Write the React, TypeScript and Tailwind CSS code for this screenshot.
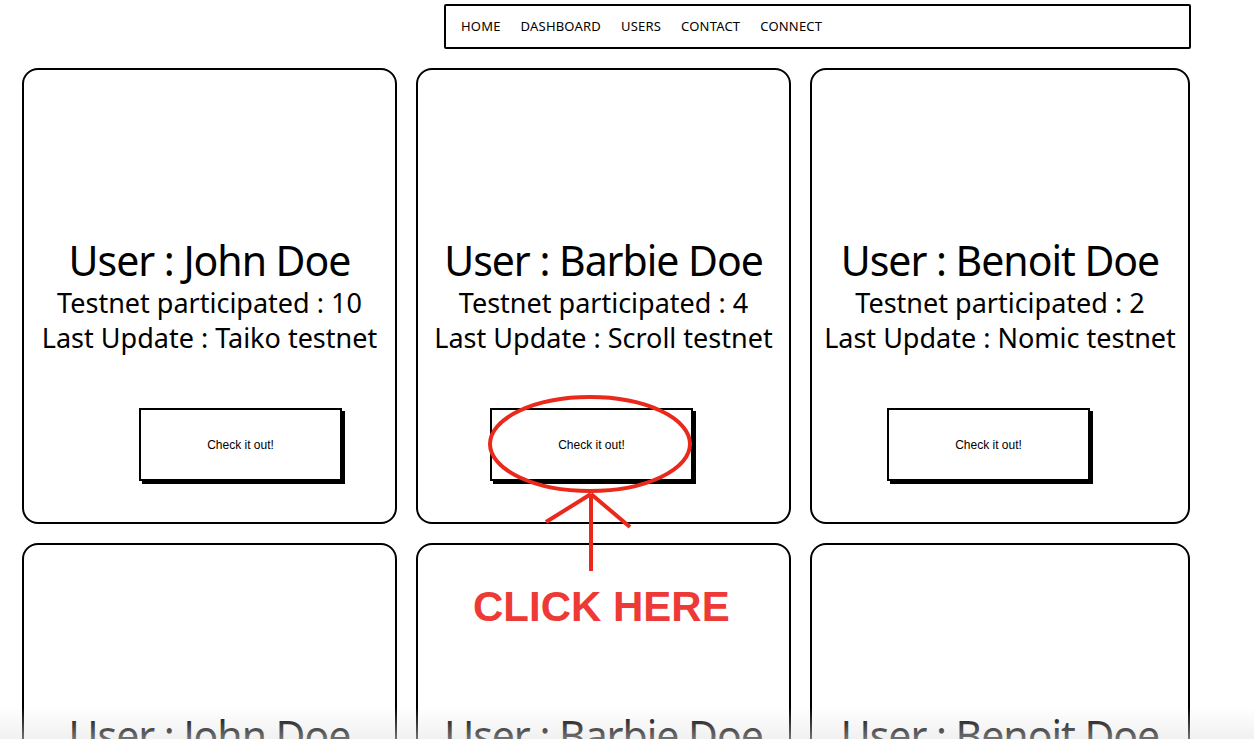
import React from 'react';

interface UserCard {
  name: string;
  testnets: number;
  lastUpdate: string;
  btnOffset: string;
}

const users: UserCard[] = [
  { name: 'John Doe', testnets: 10, lastUpdate: 'Taiko testnet', btnOffset: 'ml-[115px]' },
  { name: 'Barbie Doe', testnets: 4, lastUpdate: 'Scroll testnet', btnOffset: 'ml-[72px]' },
  { name: 'Benoit Doe', testnets: 2, lastUpdate: 'Nomic testnet', btnOffset: 'ml-[75px]' },
];

const navItems = ['HOME', 'DASHBOARD', 'USERS', 'CONTACT', 'CONNECT'];

const Card: React.FC<{ user: UserCard }> = ({ user }) => (
  <div className="h-[456px] border-2 border-black rounded-[16px] bg-white flex flex-col">
    <div className="pt-[170px] flex flex-col items-center text-black leading-none whitespace-nowrap">
      <h2 className="text-[41px] font-normal tracking-tight">User : {user.name}</h2>
      <p className="text-[27px] mt-[8px]">Testnet participated : {user.testnets}</p>
      <p className="text-[27px] mt-[8px]">Last Update : {user.lastUpdate}</p>
    </div>
    <button
      className={`${user.btnOffset} mt-[57px] w-[203px] h-[73px] border-2 border-black bg-white shadow-[3px_3px_0_0_#000] text-[12px] text-black`}
      style={{ fontFamily: '"Liberation Sans", Arial, sans-serif' }}
    >
      Check it out!
    </button>
  </div>
);

export default function App() {
  return (
    <div
      className="relative w-[1254px] h-[739px] overflow-hidden bg-white"
      style={{ fontFamily: '"Noto Sans", Lato, sans-serif' }}
    >
      {/* Nav */}
      <div className="pl-[444px] pt-[4px]">
        <nav className="w-[747px] h-[45px] border-2 border-black rounded-[2px] flex items-center pl-[15px] gap-[20px] text-[13px] tracking-[0.2px] text-black">
          {navItems.map((item) => (
            <a key={item} href="#" className="leading-none">
              {item}
            </a>
          ))}
        </nav>
      </div>

      {/* Cards */}
      <div className="mt-[19px] pl-[22px] grid grid-cols-[375px_375px_380px] gap-x-[19px] gap-y-[19px]">
        {[...users, ...users].map((u, i) => (
          <Card key={i} user={u} />
        ))}
      </div>

      {/* Annotation */}
      <svg className="absolute inset-0 pointer-events-none" width="1254" height="739">
        <ellipse cx="590" cy="444" rx="100" ry="47" fill="none" stroke="#e8291c" strokeWidth="4" />
        <line x1="591" y1="494" x2="591" y2="571" stroke="#e8291c" strokeWidth="4" />
        <line x1="546" y1="522" x2="591" y2="494" stroke="#e8291c" strokeWidth="4" />
        <line x1="591" y1="494" x2="630" y2="527" stroke="#e8291c" strokeWidth="4" />
      </svg>
      <div
        className="absolute left-[473px] top-[586px] text-[42px] font-bold leading-none text-[#ee3a36]"
        style={{ fontFamily: '"Liberation Sans", Arial, sans-serif' }}
      >
        CLICK HERE
      </div>

      {/* bottom fade */}
      <div className="absolute left-0 right-0 bottom-0 h-[32px] bg-gradient-to-b from-transparent to-[#e2e2e2]/50 pointer-events-none" />
    </div>
  );
}
